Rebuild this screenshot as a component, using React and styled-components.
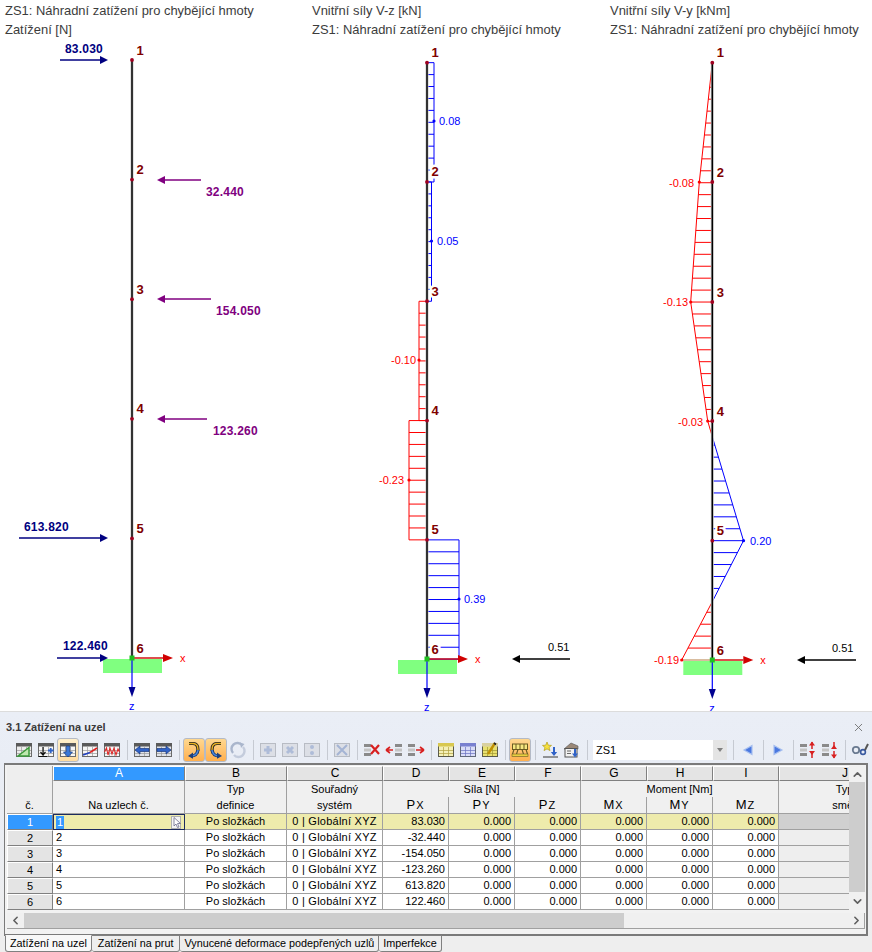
import React from 'react';
import styled, { createGlobalStyle } from 'styled-components';
import { ChevronUp, ChevronDown, ChevronLeft, ChevronRight, X } from 'lucide-react';

const GlobalStyle = createGlobalStyle`
  html, body { margin: 0; padding: 0; background: #fff; }
  body { font-family: "Liberation Sans", Arial, sans-serif; }
`;

const Page = styled.div`
  width: 872px;
  height: 952px;
  display: flex;
  flex-direction: column;
  overflow: hidden;
`;

/* ---------- diagrams ---------- */

const Diagrams = styled.div`
  display: flex;
  height: 711px;
  flex: none;
`;

const Pane = styled.section`
  width: ${(p) => p.$w}px;
  flex: none;
  display: flex;
  flex-direction: column;
`;

const Heading = styled.div`
  padding: 1px 0 0 5px;
  height: 39px;
  font-size: 12.95px;
  line-height: 19px;
  color: #3c3c3c;
  white-space: nowrap;
`;

const Drawing = styled.svg`
  display: block;
  flex: none;
`;

const NodeNo = styled.text`
  font: bold 13px "Liberation Sans", Arial, sans-serif;
  fill: #800000;
  paint-order: stroke;
  stroke: #fff;
  stroke-width: ${(p) => (p.$halo ? 5 : 0)}px;
  stroke-linejoin: round;
`;

const LoadValue = styled.text`
  font: bold 12px "Liberation Sans", Arial, sans-serif;
  letter-spacing: 0.2px;
  fill: ${(p) => p.$c};
`;

const Value = styled.text`
  font: 11px "Liberation Sans", Arial, sans-serif;
  fill: ${(p) => p.$c};
`;

const RED = '#ff0000';
const BLUE = '#0000ff';
const NAVY = '#000080';
const PURPLE = '#800080';

// horizontal arrow, the head sits at x2
const Arrow = ({ x1, x2, y, c, w = 1.4, head = 8 }) => {
  const d = x2 > x1 ? 1 : -1;
  return (
    <>
      <line x1={x1} y1={y} x2={x2 - d * head} y2={y} stroke={c} strokeWidth={w} />
      <polygon points={`${x2},${y} ${x2 - d * head},${y - 4} ${x2 - d * head},${y + 4}`} fill={c} />
    </>
  );
};

const Member = ({ x, nodes }) => (
  <>
    <line x1={x} y1={nodes[0]} x2={x} y2={nodes[5]} stroke="#c8c8c8" strokeWidth={3} />
    <line x1={x} y1={nodes[0]} x2={x} y2={nodes[5]} stroke="#000" strokeWidth={1.5} />
  </>
);

const NodeDots = ({ x, nodes }) =>
  nodes.slice(0, 5).map((y) => <circle key={y} cx={x} cy={y} r={1.9} fill="#a00020" />);

const NodeNumbers = ({ x, nodes, halo }) =>
  nodes.map((y, i) => (
    <NodeNo key={y} x={x + 4.5} y={y - 5.5} $halo={halo}>
      {i + 1}
    </NodeNo>
  ));

const Support = ({ x, y }) => (
  <>
    <rect x={x - 29} y={y + 1} width={59} height={14} fill="#80ff80" />
    <line x1={x} y1={y} x2={x} y2={y + 30} stroke={BLUE} strokeWidth={1.2} />
    <polygon points={`${x},${y + 39} ${x - 3.5},${y + 29} ${x + 3.5},${y + 29}`} fill="#000090" />
    <Arrow x1={x} x2={x + 41} y={y} c="#d00000" w={1.4} head={10} />
    <rect x={x - 2.5} y={y - 2.5} width={5} height={5} fill="#20c020" />
    <Value x={x + 48} y={y + 4} $c={RED}>x</Value>
    <Value x={x - 3} y={y + 52} $c={BLUE}>z</Value>
  </>
);

// value block with hatch lines, as drawn between two nodes
const Block = ({ from, to, y0, y1, line, n = 10 }) => (
  <>
    {Array.from({ length: n + 1 }, (_, k) => {
      const y = y0 + ((y1 - y0) * k) / n;
      return <line key={k} x1={from} y1={y} x2={to} y2={y} stroke={line} strokeWidth={1} />;
    })}
    <line x1={to === 427 ? from : to} y1={y0} x2={to === 427 ? from : to} y2={y1} stroke={line} strokeWidth={1} />
  </>
);

const LoadsDiagram = () => {
  const nodes = [60, 179.6, 299.2, 418.8, 538.4, 658];
  return (
    <Drawing width={307} height={671} viewBox="0 40 307 671">
      <Member x={132} nodes={nodes} />
      <NodeDots x={132} nodes={nodes} />
      <Support x={132} y={658} />
      <NodeNumbers x={132} nodes={nodes} />
      <Arrow x1={60} x2={108} y={60} c={NAVY} />
      <LoadValue x={65} y={53} $c={NAVY}>83.030</LoadValue>
      <Arrow x1={201} x2={157} y={180} c={PURPLE} />
      <LoadValue x={206} y={196} $c={PURPLE}>32.440</LoadValue>
      <Arrow x1={211} x2={157} y={299} c={PURPLE} />
      <LoadValue x={216} y={315} $c={PURPLE}>154.050</LoadValue>
      <Arrow x1={207} x2={157} y={419} c={PURPLE} />
      <LoadValue x={213} y={435} $c={PURPLE}>123.260</LoadValue>
      <Arrow x1={19} x2={108} y={538} c={NAVY} />
      <LoadValue x={24} y={531} $c={NAVY}>613.820</LoadValue>
      <Arrow x1={57} x2={108} y={658} c={NAVY} />
      <LoadValue x={63} y={650} $c={NAVY}>122.460</LoadValue>
    </Drawing>
  );
};

const ShearDiagram = () => {
  const nodes = [62.67, 181.97, 301.27, 420.57, 539.87, 659.17];
  const bar = 427;
  return (
    <Drawing width={298} height={671} viewBox="307 40 298 671">
      <Block from={bar} to={434} y0={nodes[0]} y1={nodes[1]} line={BLUE} />
      <Block from={bar} to={431.5} y0={nodes[1]} y1={nodes[2]} line={BLUE} />
      <Block from={419} to={bar} y0={nodes[2]} y1={nodes[3]} line={RED} />
      <Block from={409} to={bar} y0={nodes[3]} y1={nodes[4]} line={RED} />
      <Block from={bar} to={459} y0={nodes[4]} y1={nodes[5]} line={BLUE} />
      <Member x={bar} nodes={nodes} />
      <NodeDots x={bar} nodes={nodes} />
      <Support x={bar} y={659} />
      <NodeNumbers x={bar} nodes={nodes} halo />
      <circle cx={434} cy={121} r={1.6} fill={BLUE} />
      <Value x={439} y={125} $c={BLUE}>0.08</Value>
      <circle cx={431.5} cy={241} r={1.6} fill={BLUE} />
      <Value x={437} y={245} $c={BLUE}>0.05</Value>
      <circle cx={419} cy={360} r={1.6} fill={RED} />
      <Value x={391} y={364} $c={RED}>-0.10</Value>
      <circle cx={409} cy={480} r={1.6} fill={RED} />
      <Value x={379} y={484} $c={RED}>-0.23</Value>
      <circle cx={459} cy={599} r={1.6} fill={BLUE} />
      <Value x={464} y={603} $c={BLUE}>0.39</Value>
      <Arrow x1={570} x2={512} y={659} c="#000" w={1.5} />
      <Value x={548} y={651} $c="#000">0.51</Value>
    </Drawing>
  );
};

const MOMENT = [
  [62.7, 712.3],
  [182, 699.3],
  [302, 690.7],
  [421, 707.7],
  [436.7, 712.3],
  [540.7, 743.5],
  [601.7, 712.3],
  [660, 681.7],
];

const momentX = (y) => {
  for (let i = 0; i < MOMENT.length - 1; i += 1) {
    const [y0, x0] = MOMENT[i];
    const [y1, x1] = MOMENT[i + 1];
    if (y <= y1) return x0 + ((x1 - x0) * (y - y0)) / (y1 - y0);
  }
  return 712.3;
};

const MomentDiagram = () => {
  const nodes = [62.7, 182, 302, 421, 540.7, 660];
  const bar = 712.3;
  const hatches = Array.from({ length: 50 }, (_, k) => 63.4 + k * 11.932);
  const toPoints = (list) => list.map(([y, x]) => `${x},${y}`).join(' ');
  return (
    <Drawing width={267} height={671} viewBox="605 40 267 671">
      {hatches.map((y) => (
        <line
          key={y}
          x1={momentX(y)}
          y1={y}
          x2={bar}
          y2={y}
          stroke={y > 436.7 && y < 601.7 ? BLUE : RED}
          strokeWidth={1}
        />
      ))}
      <line x1={681.7} y1={660} x2={bar} y2={660} stroke="#c09060" strokeWidth={1.2} />
      <polyline points={toPoints(MOMENT.slice(0, 5))} fill="none" stroke={RED} strokeWidth={1} />
      <polyline points={toPoints(MOMENT.slice(4, 7))} fill="none" stroke={BLUE} strokeWidth={1} />
      <polyline points={toPoints(MOMENT.slice(6))} fill="none" stroke={RED} strokeWidth={1} />
      <Member x={bar} nodes={nodes} />
      <NodeDots x={bar} nodes={nodes} />
      <Support x={bar} y={660} />
      <NodeNumbers x={bar} nodes={nodes} halo />
      <circle cx={699.3} cy={182} r={1.6} fill={RED} />
      <Value x={669} y={187} $c={RED}>-0.08</Value>
      <circle cx={690.7} cy={302} r={1.6} fill={RED} />
      <Value x={663} y={306} $c={RED}>-0.13</Value>
      <circle cx={707.7} cy={421} r={1.6} fill={RED} />
      <Value x={678} y={426} $c={RED}>-0.03</Value>
      <circle cx={743.5} cy={540.7} r={1.6} fill={BLUE} />
      <Value x={750} y={545} $c={BLUE}>0.20</Value>
      <circle cx={681.7} cy={660} r={1.6} fill={RED} />
      <Value x={654} y={664} $c={RED}>-0.19</Value>
      <Arrow x1={856} x2={797} y={660} c="#000" w={1.5} />
      <Value x={832} y={652} $c="#000">0.51</Value>
    </Drawing>
  );
};

/* ---------- toolbar icons ---------- */

const Ico = ({ children }) => (
  <svg width="18" height="18" viewBox="0 0 18 18" aria-hidden="true">
    {children}
  </svg>
);

const Sheet = ({ head = '#5a5a5a', fill = '#ececec', line = '#9a9a9a', edge = '#6a6a6a' }) => (
  <>
    <rect x="1.5" y="2.5" width="15" height="13" fill={fill} stroke={edge} />
    <path d={`M2 9.5H16M2 12.5H16M6.5 6V15M11.5 6V15`} stroke={line} strokeWidth="0.7" fill="none" />
    <rect x="1" y="2" width="16" height="3.5" fill={head} />
  </>
);

const Fat = ({ dir, c = '#2f62c8', dark = '#1a3a80' }) => {
  const pts = {
    left: '2,9 7,5 7,7.5 16,7.5 16,10.5 7,10.5 7,13',
    right: '16,9 11,5 11,7.5 2,7.5 2,10.5 11,10.5 11,13',
    down: '9,16 4.5,11 7.2,11 7.2,5 10.8,5 10.8,11 13.5,11',
  }[dir];
  return <polygon points={pts} fill={c} stroke={dark} strokeWidth="0.7" />;
};

const Dim = ({ children }) => (
  <>
    <rect x="1.5" y="2.5" width="15" height="13" fill="#dcdfe6" stroke="#b8bcc4" />
    {children}
  </>
);

const Blocks = ({ x = 2 }) => (
  <>
    <rect x={x} y="3" width="7" height="3" fill="#8a8a8a" />
    <rect x={x} y="7.5" width="7" height="3" fill="#c4c4c4" />
    <rect x={x} y="12" width="7" height="3" fill="#8a8a8a" />
  </>
);

const tableIcon = (head, fill, line, edge) => <Sheet head={head} fill={fill} line={line} edge={edge} />;

const ICONS = {
  triangle: (
    <Ico>
      <Sheet />
      <polygon points="3,15 14,15 14,6.5" fill="#bfe8b0" stroke="#3c9a3c" strokeWidth="1.5" />
    </Ico>
  ),
  addLoad: (
    <Ico>
      <Sheet fill="#f6f6f6" />
      <path d="M6 6V13.5M3.5 11L6 14L8.5 11M1.5 15.5H10" stroke="#111" strokeWidth="1.2" fill="none" />
      <path d="M11 9.5H16.5M13.7 7V12" stroke="#2f62c8" strokeWidth="1.8" />
    </Ico>
  ),
  downLoad: (
    <Ico>
      <Sheet fill="#f6f6f6" />
      <Fat dir="down" c="#3a78d8" />
    </Ico>
  ),
  slope: (
    <Ico>
      <Sheet fill="#f6f6f6" />
      <path d="M2 14L9 11.5" stroke="#2040c0" strokeWidth="1.6" />
      <path d="M9 11.5L16 7" stroke="#e02020" strokeWidth="1.6" />
    </Ico>
  ),
  wave: (
    <Ico>
      <Sheet fill="#f6f6f6" />
      <path d="M1.5 11L3.5 7L5 14L7 7L9 13L11 7L13 14L15 8L16.5 11" stroke="#e02828" strokeWidth="1.1" fill="none" />
    </Ico>
  ),
  sheetLeft: (
    <Ico>
      <Sheet fill="#dfe2e8" />
      <Fat dir="left" />
    </Ico>
  ),
  sheetRight: (
    <Ico>
      <Sheet fill="#dfe2e8" />
      <Fat dir="right" />
    </Ico>
  ),
  curveA: (
    <Ico>
      <path d="M4 2.5H8C13 2.5 14 8 12 12" stroke="#222" strokeWidth="3.2" fill="none" />
      <path d="M4 2.5H8C13 2.5 14 8 12 12" stroke="#e8b020" strokeWidth="1.4" fill="none" />
      <path d="M13 9C12.5 12.5 10 15 6 15" stroke="#20407a" strokeWidth="3" fill="none" />
      <path d="M13 9C12.5 12.5 10 15 6 15" stroke="#4a88e0" strokeWidth="1.4" fill="none" />
      <polygon points="3,15 8,11.5 8,17.8" fill="#20407a" />
    </Ico>
  ),
  curveB: (
    <Ico>
      <path d="M14 2.5H10C5 2.5 4 8 6 12" stroke="#222" strokeWidth="3.2" fill="none" />
      <path d="M14 2.5H10C5 2.5 4 8 6 12" stroke="#e8b020" strokeWidth="1.4" fill="none" />
      <path d="M5 9C5.5 12.5 8 15 12 15" stroke="#20407a" strokeWidth="3" fill="none" />
      <path d="M5 9C5.5 12.5 8 15 12 15" stroke="#4a88e0" strokeWidth="1.4" fill="none" />
      <polygon points="15,15 10,11.5 10,17.8" fill="#20407a" />
    </Ico>
  ),
  cycle: (
    <Ico>
      <path d="M4 12A6 6 0 0 1 13 4" stroke="#aab6cc" strokeWidth="2.4" fill="none" />
      <path d="M14 6A6 6 0 0 1 5 14" stroke="#c4ccdc" strokeWidth="2.4" fill="none" />
      <polygon points="11,1.5 15.5,3 12,7" fill="#aab6cc" />
    </Ico>
  ),
  dimPlus: (
    <Ico>
      <Dim>
        <path d="M9 5V13M5 9H13" stroke="#aebcd8" strokeWidth="3" />
      </Dim>
    </Ico>
  ),
  dimMinus: (
    <Ico>
      <Dim>
        <path d="M6 6L12 12M12 6L6 12" stroke="#aebcd8" strokeWidth="3" />
      </Dim>
    </Ico>
  ),
  dimDots: (
    <Ico>
      <Dim>
        <circle cx="9" cy="6" r="2" fill="#aebcd8" />
        <circle cx="9" cy="12" r="2" fill="#aebcd8" />
      </Dim>
    </Ico>
  ),
  dimCross: (
    <Ico>
      <Dim>
        <path d="M4 4L14 14M14 4L4 14" stroke="#a4b4d4" strokeWidth="2" />
      </Dim>
    </Ico>
  ),
  delRows: (
    <Ico>
      <Blocks x={1} />
      <path d="M8 4L16 13M16 4L8 13" stroke="#d82020" strokeWidth="2.2" />
    </Ico>
  ),
  toLeft: (
    <Ico>
      <path d="M1 9H8M1 9L5 6M1 9L5 12" stroke="#d82020" strokeWidth="1.6" fill="none" />
      <Blocks x={10} />
    </Ico>
  ),
  toRight: (
    <Ico>
      <Blocks x={1} />
      <path d="M9 9H17M17 9L13 6M17 9L13 12" stroke="#d82020" strokeWidth="1.6" fill="none" />
    </Ico>
  ),
  yellowRows: <Ico>{tableIcon('#d8c850', '#f4f0b8', '#b0a040', '#5a5a4a')}</Ico>,
  blueRows: <Ico>{tableIcon('#7880d0', '#d8dcf8', '#6870c0', '#606878')}</Ico>,
  editRows: (
    <Ico>
      {tableIcon('#d8d0a0', '#e8e070', '#a09830', '#5a5a4a')}
      <path d="M7 13L14 2" stroke="#c09000" strokeWidth="2.4" />
      <path d="M13 2L15 3.5" stroke="#222" strokeWidth="1.6" />
    </Ico>
  ),
  supports: (
    <Ico>
      <rect x="1.5" y="3" width="15" height="5.5" fill="#f6e880" stroke="#6a5a20" />
      <path d="M5 3V8.5M9 3V8.5M13 3V8.5" stroke="#6a5a20" fill="none" />
      <path d="M3 8.5L1.5 13M7 8.5L5.5 13M11 8.5L12.5 13M15 8.5L16.5 13" stroke="#6a5a20" strokeWidth="1.1" />
      <rect x="1" y="13" width="16" height="2.5" fill="#e8d040" stroke="#6a5a20" strokeWidth="0.6" />
    </Ico>
  ),
  newLoad: (
    <Ico>
      <polygon points="6,1 7.3,4.2 10.5,4.4 8,6.5 9,9.6 6,7.9 3,9.6 4,6.5 1.5,4.4 4.7,4.2" fill="#f6e040" stroke="#a89000" strokeWidth="0.6" />
      <path d="M13 6V12" stroke="#2f62c8" strokeWidth="2" />
      <polygon points="13,15 9.8,11 16.2,11" fill="#2f62c8" />
      <path d="M2 16H17" stroke="#555" strokeWidth="1.2" />
    </Ico>
  ),
  importLoad: (
    <Ico>
      <polygon points="1,8 8,2 15,5 15,8" fill="#9a8878" stroke="#555" strokeWidth="0.6" />
      <rect x="2" y="7.5" width="12" height="8.5" fill="#f2f2f2" stroke="#555" />
      <path d="M4 10H8M4 12.5H8" stroke="#666" />
      <path d="M12 8V13" stroke="#2f62c8" strokeWidth="2" />
      <polygon points="12,16.5 9,12.5 15,12.5" fill="#2f62c8" />
    </Ico>
  ),
  prev: (
    <Ico>
      <polygon points="5,9 13,4.5 13,13.5" fill="#4a78e0" stroke="#a8c0f0" strokeWidth="1.2" />
    </Ico>
  ),
  next: (
    <Ico>
      <polygon points="13,9 5,4.5 5,13.5" fill="#4a78e0" stroke="#a8c0f0" strokeWidth="1.2" />
    </Ico>
  ),
  colsUp: (
    <Ico>
      <Blocks x={1} />
      <path d="M13 1V8M13 10V17" stroke="#d82020" strokeWidth="1.5" />
      <polygon points="13,0.5 10,4.5 16,4.5" fill="#d82020" />
      <polygon points="13,14 10,10 16,10" fill="#d82020" />
    </Ico>
  ),
  colsDown: (
    <Ico>
      <Blocks x={1} />
      <path d="M13 1V8M13 10V17" stroke="#d82020" strokeWidth="1.5" />
      <polygon points="13,4 10,8 16,8" fill="#d82020" />
      <polygon points="13,17.5 10,13.5 16,13.5" fill="#d82020" />
    </Ico>
  ),
  tools: (
    <Ico>
      <circle cx="5" cy="9" r="3.2" fill="none" stroke="#6a7a90" strokeWidth="1.8" />
      <circle cx="12" cy="11" r="2.4" fill="none" stroke="#3a5aa0" strokeWidth="1.6" />
      <path d="M14 9L17 3" stroke="#555" strokeWidth="2" />
    </Ico>
  ),
};

const TOOLBAR_LEFT = [
  ['triangle'], ['addLoad'], ['downLoad', 'light'], ['slope'], ['wave'], 'sep',
  ['sheetLeft'], ['sheetRight'], 'sep',
  ['curveA', 'on'], ['curveB', 'on'], ['cycle'], 'sep',
  ['dimPlus'], ['dimMinus'], ['dimDots'], 'sep',
  ['dimCross'], 'sep',
  ['delRows'], ['toLeft'], ['toRight'], 'sep',
  ['yellowRows'], ['blueRows'], ['editRows'], 'sep',
  ['supports', 'on'], 'sep',
  ['newLoad'], ['importLoad'], 'sep',
];

const TOOLBAR_RIGHT = [
  'sep', ['prev'], 'sep', ['next'], 'sep', ['colsUp'], ['colsDown'], 'sep', ['tools'],
];

/* ---------- panel ---------- */

const Panel = styled.section`
  flex: 1;
  display: flex;
  flex-direction: column;
  min-height: 0;
  border-top: 1px solid #dcdcdc;
  background: linear-gradient(#eaeef6 0, #e9edf5 52px, #eeeeee 230px);
  font-size: 11px;
  color: #000;
`;

const TitleBar = styled.div`
  height: 25px;
  flex: none;
  display: flex;
  align-items: center;
  justify-content: space-between;
  padding: 5px 7px 0 6px;
  box-sizing: border-box;
  font-weight: bold;
  font-size: 11px;
  color: #3a3a3a;
`;

const CloseIcon = styled(X)`
  color: #6c6c6c;
  flex: none;
`;

const Toolbar = styled.div`
  height: 26px;
  flex: none;
  display: flex;
  align-items: center;
  padding-left: 13px;
`;

const ToolButton = styled.div`
  width: 22px;
  height: 24px;
  flex: none;
  box-sizing: border-box;
  display: flex;
  align-items: center;
  justify-content: center;
  border: 1px solid ${(p) => (p.$state ? '#b4bac6' : 'transparent')};
  border-radius: 3px;
  background: ${(p) =>
    p.$state === 'on'
      ? 'linear-gradient(#ffd890, #ffb050)'
      : p.$state === 'light'
        ? 'linear-gradient(#fff0cc, #ffdca0)'
        : 'transparent'};
`;

const ToolSep = styled.div`
  width: 8px;
  height: 20px;
  flex: none;
  display: flex;
  justify-content: center;
  &::before {
    content: '';
    width: 1px;
    background: #c6cad2;
  }
`;

const Combo = styled.div`
  width: 134px;
  height: 20px;
  margin-left: 2px;
  margin-right: 2px;
  flex: none;
  display: flex;
  background: #fff;
  box-sizing: border-box;
  align-items: stretch;
`;

const ComboText = styled.div`
  flex: 1;
  padding-left: 3px;
  line-height: 20px;
`;

const ComboButton = styled.div`
  width: 14px;
  background: #e4e4e4;
  display: flex;
  align-items: center;
  justify-content: center;
  &::before {
    content: '';
    border: 3.5px solid transparent;
    border-top: 4px solid #808080;
    border-bottom: 0;
  }
`;

const Frame = styled.div`
  flex: none;
  margin-left: 4px;
  width: 864px;
  height: 173px;
  box-sizing: border-box;
  border: 1px solid #7a7a7a;
  border-top-width: 2px;
  border-right-width: 2px;
  border-bottom-width: 2px;
  padding: 1px 1px 0 2px;
  background: #f2f2f2;
  display: grid;
  grid-template-columns: 842px 16px;
  grid-template-rows: 144px 16px;
  row-gap: 3px;
`;

const TableClip = styled.div`
  overflow: hidden;
`;

const Table = styled.table`
  width: 904px;
  table-layout: fixed;
  border-collapse: separate;
  border-spacing: 0;
  font-size: 11px;
  line-height: 13px;
`;

const HeadRow = styled.tr`
  height: ${(p) => p.$h}px;
`;

const Letter = styled.th`
  padding: 0;
  font-weight: normal;
  font-size: 12px;
  text-align: center;
  box-sizing: border-box;
  background: ${(p) => (p.$selected ? '#3399ff' : '#e4e4e4')};
  color: ${(p) => (p.$selected ? '#fff' : '#000')};
  border-top: 1px solid #fff;
  border-left: 1px solid #fff;
  border-right: 1px solid #808080;
  border-bottom: 1px solid #808080;
`;

const Corner = styled.th`
  padding: 0 0 1px;
  font-weight: normal;
  vertical-align: bottom;
  text-align: center;
  background: #eeeeee;
  border-right: 1px solid #a0a0a0;
  border-bottom: 1px solid #a0a0a0;
`;

const HeadCell = styled.th`
  padding: ${(p) => (p.$bottom ? '0 0 1px' : '0')};
  font-weight: normal;
  text-align: center;
  white-space: nowrap;
  vertical-align: ${(p) => (p.$bottom ? 'bottom' : 'middle')};
  background: #f0f0f0;
  border-right: 1px solid #a0a0a0;
  border-bottom: ${(p) => (p.$open ? '0' : '1px solid #a0a0a0')};
`;

const Symbol = styled.span`
  font-size: 13px;
  line-height: 13px;
  letter-spacing: 1px;
  small { font-size: 11px; }
`;

const RowNo = styled.th`
  padding: 0;
  font-weight: normal;
  text-align: center;
  height: 16px;
  box-sizing: border-box;
  background: ${(p) => (p.$selected ? '#3399ff' : '#e4e4e4')};
  color: ${(p) => (p.$selected ? '#fff' : '#000')};
  border-top: 1px solid #fff;
  border-left: 1px solid #fff;
  border-right: 1px solid #808080;
  border-bottom: 1px solid #808080;
`;

const Cell = styled.td`
  padding: 0 3px;
  height: 16px;
  box-sizing: border-box;
  white-space: nowrap;
  letter-spacing: ${(p) => p.$track || 0}px;
  text-align: ${(p) => p.$align || 'left'};
  background: ${(p) => (p.$selected ? '#eeebac' : '#fff')};
  border-right: 1px solid #a0a0a0;
  border-bottom: 1px solid #a0a0a0;
`;

const EmptyCell = styled.td`
  background: ${(p) => (p.$selected ? '#d0d0d0' : '#eeeeee')};
  border-right: 1px solid #a0a0a0;
  border-bottom: 1px solid #a0a0a0;
`;

const ActiveCell = styled.td`
  padding: 0;
  height: 16px;
  box-sizing: border-box;
  background: #eeebac;
  border: 1px solid #1c2a5e;
`;

const ActiveInner = styled.div`
  display: flex;
  align-items: center;
  justify-content: space-between;
  height: 14px;
  overflow: hidden;
  padding: 0 1px 0 2px;
`;

const ActiveText = styled.span`
  background: #3399ff;
  color: #fff;
  padding: 0 1px;
`;

const VScroll = styled.div`
  display: flex;
  flex-direction: column;
  background: #f0f0f0;
`;

const ScrollButton = styled.div`
  flex: none;
  display: flex;
  align-items: center;
  justify-content: center;
  width: ${(p) => p.$w || 16}px;
  height: ${(p) => p.$h || 16}px;
  color: #606060;
`;

const VThumb = styled.div`
  height: 110px;
  flex: none;
  background: #cdcdcd;
`;

const HScroll = styled.div`
  grid-column: 1 / 3;
  display: flex;
  background: #f0f0f0;
  border-bottom: 1px solid #a0a0a0;
  border-right: 1px solid #a0a0a0;
  box-sizing: content-box;
  height: 15px;
`;

const HThumb = styled.div`
  width: 600px;
  flex: none;
  background: #cdcdcd;
`;

const HTrack = styled.div`
  flex: 1;
`;

const Tabs = styled.div`
  flex: 1;
  display: flex;
  padding-left: 5px;
  align-items: flex-start;
  font-size: 10.8px;
`;

const Tab = styled.div`
  height: 15px;
  line-height: 15px;
  padding: 0 ${(p) => p.$pad}px;
  margin-top: -1px;
  box-sizing: content-box;
  white-space: nowrap;
  background: ${(p) => (p.$active ? '#f8f8f8' : '#eeeeee')};
  border: 1px solid #808080;
  border-top-color: ${(p) => (p.$active ? '#f8f8f8' : '#808080')};
  border-left-width: ${(p) => (p.$first ? 1 : 0)}px;
  border-radius: 0 0 3px 3px;
`;

/* ---------- data ---------- */

const COLUMNS = [
  { letter: 'A', w: 132 },
  { letter: 'B', w: 102 },
  { letter: 'C', w: 96 },
  { letter: 'D', w: 66 },
  { letter: 'E', w: 66 },
  { letter: 'F', w: 66 },
  { letter: 'G', w: 66 },
  { letter: 'H', w: 66 },
  { letter: 'I', w: 66 },
  { letter: 'J', w: 132 },
];

const ROWS = [
  { no: 1, px: '83.030' },
  { no: 2, px: '-32.440' },
  { no: 3, px: '-154.050' },
  { no: 4, px: '-123.260' },
  { no: 5, px: '613.820' },
  { no: 6, px: '122.460' },
];

const SYMBOLS = [
  ['P', 'X'], ['P', 'Y'], ['P', 'Z'],
  ['M', 'X'], ['M', 'Y'], ['M', 'Z'],
];

const TAB_LABELS = [
  { label: 'Zatížení na uzel', pad: 4, active: true, first: true },
  { label: 'Zatížení na prut', pad: 6 },
  { label: 'Vynucené deformace podepřených uzlů', pad: 4 },
  { label: 'Imperfekce', pad: 4 },
];

const renderTools = (list, prefix) =>
  list.map((item, i) =>
    item === 'sep' ? (
      <ToolSep key={`${prefix}${i}`} />
    ) : (
      <ToolButton key={`${prefix}${i}`} $state={item[1]}>
        {ICONS[item[0]]}
      </ToolButton>
    ),
  );

const CursorIcon = () => (
  <svg width="12" height="13" viewBox="0 0 12 13" aria-hidden="true">
    <rect x="0.5" y="0.5" width="9" height="12" fill="#f4f4f4" stroke="#b0b0b0" />
    <path d="M3 1.5V10L5 8L6.5 11.5L8 11L6.5 7.5H9.5Z" fill="#fff" stroke="#6c6c8c" strokeWidth="0.8" />
  </svg>
);

const App = () => (
  <Page>
    <GlobalStyle />
    <Diagrams>
      <Pane $w={307}>
        <Heading>
          ZS1: Náhradní zatížení pro chybějící hmoty
          <br />
          Zatížení [N]
        </Heading>
        <LoadsDiagram />
      </Pane>
      <Pane $w={298}>
        <Heading>
          Vnitřní síly V-z [kN]
          <br />
          ZS1: Náhradní zatížení pro chybějící hmoty
        </Heading>
        <ShearDiagram />
      </Pane>
      <Pane $w={267}>
        <Heading>
          Vnitřní síly V-y [kNm]
          <br />
          ZS1: Náhradní zatížení pro chybějící hmoty
        </Heading>
        <MomentDiagram />
      </Pane>
    </Diagrams>

    <Panel>
      <TitleBar>
        3.1 Zatížení na uzel
        <CloseIcon size={13} strokeWidth={1.6} />
      </TitleBar>
      <Toolbar>
        {renderTools(TOOLBAR_LEFT, 'l')}
        <Combo>
          <ComboText>ZS1</ComboText>
          <ComboButton />
        </Combo>
        {renderTools(TOOLBAR_RIGHT, 'r')}
      </Toolbar>
      <Frame>
        <TableClip>
          <Table>
            <colgroup>
              <col style={{ width: 46 }} />
              {COLUMNS.map((c) => (
                <col key={c.letter} style={{ width: c.w }} />
              ))}
            </colgroup>
            <thead>
              <HeadRow $h={14}>
                <Corner rowSpan={3}>č.</Corner>
                {COLUMNS.map((c) => (
                  <Letter key={c.letter} $selected={c.letter === 'A'}>
                    {c.letter}
                  </Letter>
                ))}
              </HeadRow>
              <HeadRow $h={16}>
                <HeadCell rowSpan={2} $bottom>Na uzlech č.</HeadCell>
                <HeadCell $open>Typ</HeadCell>
                <HeadCell $open>Souřadný</HeadCell>
                <HeadCell colSpan={3} $open>Síla [N]</HeadCell>
                <HeadCell colSpan={3} $open>Moment [Nm]</HeadCell>
                <HeadCell $open>Typ</HeadCell>
              </HeadRow>
              <HeadRow $h={17}>
                <HeadCell>definice</HeadCell>
                <HeadCell>systém</HeadCell>
                {SYMBOLS.map(([a, b]) => (
                  <HeadCell key={a + b}>
                    <Symbol>
                      {a}
                      <small>{b}</small>
                    </Symbol>
                  </HeadCell>
                ))}
                <HeadCell>směr</HeadCell>
              </HeadRow>
            </thead>
            <tbody>
              {ROWS.map((r) => {
                const selected = r.no === 1;
                return (
                  <tr key={r.no}>
                    <RowNo $selected={selected}>{r.no}</RowNo>
                    {selected ? (
                      <ActiveCell>
                        <ActiveInner>
                          <ActiveText>{r.no}</ActiveText>
                          <CursorIcon />
                        </ActiveInner>
                      </ActiveCell>
                    ) : (
                      <Cell>{r.no}</Cell>
                    )}
                    <Cell $align="center" $selected={selected}>Po složkách</Cell>
                    <Cell $align="center" $selected={selected} $track={0.25}>0 | Globální XYZ</Cell>
                    <Cell $align="right" $selected={selected}>{r.px}</Cell>
                    {['e', 'f', 'g', 'h', 'i'].map((k) => (
                      <Cell key={k} $align="right" $selected={selected}>0.000</Cell>
                    ))}
                    <EmptyCell $selected={selected} />
                  </tr>
                );
              })}
            </tbody>
          </Table>
        </TableClip>
        <VScroll>
          <ScrollButton>
            <ChevronUp size={13} strokeWidth={3} />
          </ScrollButton>
          <VThumb />
          <ScrollButton $h={18}>
            <ChevronDown size={13} strokeWidth={3} />
          </ScrollButton>
        </VScroll>
        <HScroll>
          <ScrollButton $w={17} $h={15}>
            <ChevronLeft size={13} strokeWidth={3} />
          </ScrollButton>
          <HThumb />
          <HTrack />
          <ScrollButton $h={15}>
            <ChevronRight size={13} strokeWidth={3} />
          </ScrollButton>
        </HScroll>
      </Frame>
      <Tabs>
        {TAB_LABELS.map((t) => (
          <Tab key={t.label} $pad={t.pad} $active={t.active} $first={t.first}>
            {t.label}
          </Tab>
        ))}
      </Tabs>
    </Panel>
  </Page>
);

export default App;
